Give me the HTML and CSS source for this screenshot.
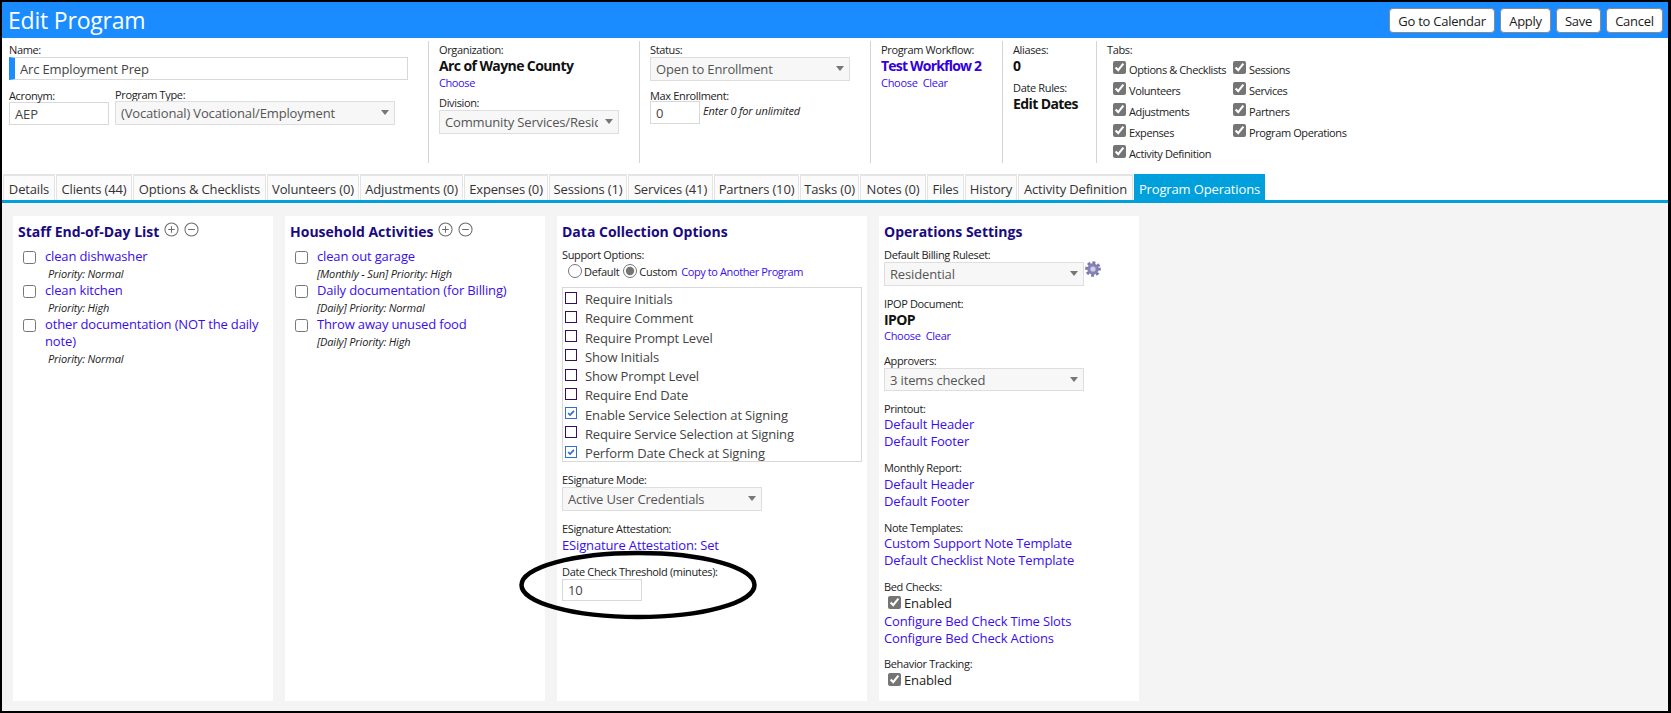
FILE: index.html
```html
<!DOCTYPE html>
<html lang="en">
<head>
<meta charset="utf-8">
<title>Edit Program</title>
<link rel="stylesheet" href="styles.css">
</head>
<body>
<div class="frame">
  <header class="topbar">
    <h1 class="title">Edit Program</h1>
    <div class="actions">
      <button class="btn b-cal">Go to Calendar</button>
      <button class="btn b-apply">Apply</button>
      <button class="btn b-save">Save</button>
      <button class="btn b-cancel">Cancel</button>
    </div>
  </header>

  <section class="form">
    <div class="col col-name">
      <div class="lbl">Name:</div>
      <input class="field field-name" value="Arc Employment Prep">
      <div class="row-2">
        <div>
          <div class="lbl lbl-low">Acronym:</div>
          <input class="field field-acr" value="AEP">
        </div>
        <div>
          <div class="lbl lbl-up">Program Type:</div>
          <div class="dd dd-type"><span class="dd-text">(Vocational) Vocational/Employment</span><i class="caret"></i></div>
        </div>
      </div>
    </div>
    <div class="col col-org">
      <div class="lbl">Organization:</div>
      <div class="strong">Arc of Wayne County</div>
      <a class="link small">Choose</a>
      <div class="lbl gap5">Division:</div>
      <div class="dd dd-div"><span class="dd-text">Community Services/Residential</span><i class="caret"></i></div>
    </div>
    <div class="col col-status">
      <div class="lbl">Status:</div>
      <div class="dd dd-status"><span class="dd-text">Open to Enrollment</span><i class="caret"></i></div>
      <div class="lbl gap6">Max Enrollment:</div>
      <div class="max-row">
        <input class="field field-max" value="0">
        <em class="hint">Enter 0 for unlimited</em>
      </div>
    </div>
    <div class="col col-wf">
      <div class="lbl">Program Workflow:</div>
      <a class="link strong">Test Workflow 2</a>
      <div class="small"><a class="link">Choose</a>&nbsp; <a class="link">Clear</a></div>
    </div>
    <div class="col col-alias">
      <div class="lbl">Aliases:</div>
      <div class="strong">0</div>
      <div class="lbl gap5">Date Rules:</div>
      <div class="strong">Edit Dates</div>
    </div>
    <div class="col col-tabs">
      <div class="lbl">Tabs:</div>
      <div class="tabs-grid">
        <label class="tick"><input type="checkbox" checked>Options &amp; Checklists</label>
        <label class="tick"><input type="checkbox" checked>Sessions</label>
        <label class="tick"><input type="checkbox" checked>Volunteers</label>
        <label class="tick"><input type="checkbox" checked>Services</label>
        <label class="tick"><input type="checkbox" checked>Adjustments</label>
        <label class="tick"><input type="checkbox" checked>Partners</label>
        <label class="tick"><input type="checkbox" checked>Expenses</label>
        <label class="tick"><input type="checkbox" checked>Program Operations</label>
        <label class="tick"><input type="checkbox" checked>Activity Definition</label>
      </div>
    </div>
  </section>

  <nav class="tabs">
    <a class="tab t1">Details</a>
    <a class="tab t2">Clients (44)</a>
    <a class="tab t3">Options &amp; Checklists</a>
    <a class="tab t4">Volunteers (0)</a>
    <a class="tab t5">Adjustments (0)</a>
    <a class="tab t6">Expenses (0)</a>
    <a class="tab t7">Sessions (1)</a>
    <a class="tab t8">Services (41)</a>
    <a class="tab t9">Partners (10)</a>
    <a class="tab t10">Tasks (0)</a>
    <a class="tab t11">Notes (0)</a>
    <a class="tab t12">Files</a>
    <a class="tab t13">History</a>
    <a class="tab t14">Activity Definition</a>
    <a class="tab t15 active">Program Operations</a>
  </nav>

  <main class="content">
    <section class="panel p-list">
      <h2 class="ptitle">Staff End-of-Day List
        <svg class="pm" viewBox="0 0 16 16"><circle cx="8" cy="8" r="7"/><path d="M8 4.5v7M4.5 8h7"/></svg>
        <svg class="pm" viewBox="0 0 16 16"><circle cx="8" cy="8" r="7"/><path d="M4.5 8h7"/></svg>
      </h2>
      <div class="item"><input type="checkbox"><div class="item-body"><a class="link">clean dishwasher</a><em class="sub sub-in">Priority: Normal</em></div></div>
      <div class="item"><input type="checkbox"><div class="item-body"><a class="link">clean kitchen</a><em class="sub sub-in">Priority: High</em></div></div>
      <div class="item"><input type="checkbox"><div class="item-body"><a class="link">other documentation (NOT the daily note)</a><em class="sub sub-in">Priority: Normal</em></div></div>
    </section>

    <section class="panel p-list">
      <h2 class="ptitle">Household Activities
        <svg class="pm" viewBox="0 0 16 16"><circle cx="8" cy="8" r="7"/><path d="M8 4.5v7M4.5 8h7"/></svg>
        <svg class="pm" viewBox="0 0 16 16"><circle cx="8" cy="8" r="7"/><path d="M4.5 8h7"/></svg>
      </h2>
      <div class="item"><input type="checkbox"><div class="item-body"><a class="link">clean out garage</a><em class="sub">[Monthly - Sun] Priority: High</em></div></div>
      <div class="item"><input type="checkbox"><div class="item-body"><a class="link">Daily documentation (for Billing)</a><em class="sub">[Daily] Priority: Normal</em></div></div>
      <div class="item"><input type="checkbox"><div class="item-body"><a class="link">Throw away unused food</a><em class="sub">[Daily] Priority: High</em></div></div>
    </section>

    <section class="panel p-data">
      <h2 class="ptitle">Data Collection Options</h2>
      <div class="lbl gap4">Support Options:</div>
      <div class="radios">
        <label class="radio"><input type="radio" name="support">Default</label>
        <label class="radio"><input type="radio" name="support" checked>Custom</label>
        <a class="link small">Copy to Another Program</a>
      </div>
      <div class="optbox">
        <div class="opt"><span class="sq"></span>Require Initials</div>
        <div class="opt"><span class="sq"></span>Require Comment</div>
        <div class="opt"><span class="sq"></span>Require Prompt Level</div>
        <div class="opt"><span class="sq"></span>Show Initials</div>
        <div class="opt"><span class="sq"></span>Show Prompt Level</div>
        <div class="opt"><span class="sq"></span>Require End Date</div>
        <div class="opt"><span class="sq on"><svg viewBox="0 0 12 12"><path d="M2.5 6l2.4 2.4 4.6-5"/></svg></span>Enable Service Selection at Signing</div>
        <div class="opt"><span class="sq"></span>Require Service Selection at Signing</div>
        <div class="opt"><span class="sq on"><svg viewBox="0 0 12 12"><path d="M2.5 6l2.4 2.4 4.6-5"/></svg></span>Perform Date Check at Signing</div>
      </div>
      <div class="lbl gap10">ESignature Mode:</div>
      <div class="dd dd-200"><span class="dd-text">Active User Credentials</span><i class="caret"></i></div>
      <div class="lbl gap10">ESignature Attestation:</div>
      <a class="link block">ESignature Attestation: Set</a>
      <div class="lbl gap10">Date Check Threshold (minutes):</div>
      <input class="field field-thresh" value="10">
    </section>

    <section class="panel p-ops">
      <h2 class="ptitle">Operations Settings</h2>
      <div class="lbl gap4">Default Billing Ruleset:</div>
      <div class="ruleset">
        <div class="dd dd-200"><span class="dd-text">Residential</span><i class="caret"></i></div>
        <svg class="gear" viewBox="0 0 16 16"><circle class="gear-teeth" cx="8" cy="8" r="6.5" transform="rotate(-11 8 8)"/><circle class="gear-body" cx="8" cy="8" r="5.4"/><circle class="gear-hole" cx="8" cy="8" r="2.6"/></svg>
      </div>
      <div class="lbl gap10">IPOP Document:</div>
      <div class="strong s17">IPOP</div>
      <div class="small"><a class="link">Choose</a>&nbsp; <a class="link">Clear</a></div>
      <div class="lbl gap10">Approvers:</div>
      <div class="dd dd-200 h23"><span class="dd-text">3 items checked</span><i class="caret"></i></div>
      <div class="lbl gap10">Printout:</div>
      <a class="link block">Default Header</a>
      <a class="link block">Default Footer</a>
      <div class="lbl gap10">Monthly Report:</div>
      <a class="link block">Default Header</a>
      <a class="link block">Default Footer</a>
      <div class="lbl gap10">Note Templates:</div>
      <a class="link block">Custom Support Note Template</a>
      <a class="link block">Default Checklist Note Template</a>
      <div class="lbl gap10">Bed Checks:</div>
      <label class="enabled"><input type="checkbox" checked>Enabled</label>
      <a class="link block gap2">Configure Bed Check Time Slots</a>
      <a class="link block">Configure Bed Check Actions</a>
      <div class="lbl gap9">Behavior Tracking:</div>
      <label class="enabled"><input type="checkbox" checked>Enabled</label>
    </section>

    <svg class="scribble" viewBox="0 0 245 76"><ellipse cx="122" cy="38" rx="116.5" ry="32"/></svg>
  </main>
</div>
</body>
</html>
```
FILE: styles.css
```css
* { box-sizing: border-box; }
html, body { margin: 0; height: 100%; overflow: hidden; }
body { font-family: "Open Sans", "Noto Sans", sans-serif; font-size: 13px; color: #222; background: #fff; }
.frame { position: relative; width: 1671px; height: 713px; border: solid #000; border-width: 2px 3px 2px 2px; display: flex; flex-direction: column; overflow: hidden; background: #fff; }

.topbar { height: 36px; flex: none; background: #1a8cff; display: flex; align-items: center; justify-content: space-between; padding: 0 5px 0 6px; }
.title { margin: 0; font-size: 23px; font-weight: 400; color: #fff; letter-spacing: -0.2px; }
.actions { display: flex; gap: 5px; margin-top: 1px; }
.btn { height: 25px; padding: 0; background: #fff; border: 1px solid #8a8a8a; border-radius: 4px; font: 13px "Open Sans", sans-serif; color: #1a1a1a; letter-spacing: -0.25px; }
.b-cal { width: 106px; }
.b-apply { width: 51px; }
.b-save { width: 45px; }
.b-cancel { width: 57px; }

.form { height: 136px; flex: none; display: flex; padding: 3px 0 11px; }
.col { padding-left: 10px; border-right: 1px solid #d4d4d4; }
.col-name { width: 427px; padding-left: 7px; }
.col-org { width: 211px; }
.col-status { width: 231px; }
.col-wf { width: 132px; }
.col-alias { width: 94px; }
.col-tabs { border-right: 0; flex: 1; }
.lbl { font-size: 11px; line-height: 15px; margin-top: 1px; color: #222; letter-spacing: -0.35px; white-space: nowrap; }
.field { display: block; height: 23px; border: 1px solid #d8d8d8; padding: 0 5px; font: 13px "Open Sans", sans-serif; color: #444; background: #fff; outline: 0; letter-spacing: -0.15px; }
.field-name { width: 399px; border-width: 1px 1px 1px 6px; border-color: #d8d8d8 #d8d8d8 #d8d8d8 #1a8cff; padding-left: 5px; }
.field-acr { width: 100px; }
.field-max { width: 50px; height: 23px; }
.field-thresh { width: 80px; height: 22px; }
.row-2 { display: flex; gap: 6px; margin-top: 6px; }
.lbl-low { margin-top: 2px; margin-bottom: -1px; }
.lbl-up { margin-bottom: -1px; }
.dd { position: relative; height: 24px; border: 1px solid #dedede; background: #f7f7f7; padding: 0 20px 0 5px; font-size: 13px; line-height: 22px; color: #555; overflow: hidden; letter-spacing: -0.15px; }
.dd-text { display: block; white-space: nowrap; overflow: hidden; }
.caret { position: absolute; right: 5px; top: 8px; border: 4px solid transparent; border-top: 5px solid #777; border-bottom: 0; }
.dd-type { width: 280px; }
.dd-div { width: 180px; }
.dd-status { width: 200px; }
.dd-200 { width: 200px; }
.h23 { height: 23px; }
.strong { display: block; font-size: 14px; line-height: 18px; font-weight: 700; color: #111; letter-spacing: -0.6px; white-space: nowrap; }
.s17 { line-height: 17px; }
a.strong { color: #3300dd; letter-spacing: -0.8px; }
.link { color: #3a0df0; letter-spacing: -0.15px; }
.small { font-size: 11px; line-height: 15px; letter-spacing: -0.3px; }
.small .link { letter-spacing: -0.3px; }
a.small { display: block; letter-spacing: -0.4px; }
.block { display: block; font-size: 13px; line-height: 17px; white-space: nowrap; }
.lbl + .block { margin-top: 0.5px; }
.gap2 { margin-top: 2px; }
.gap4 { margin-top: 4.5px; }
.gap5 { margin-top: 5px; }
.gap6 { margin-top: 6.5px; }
.gap9 { margin-top: 9px; }
.gap10 { margin-top: 10px; }
.max-row { display: flex; margin-top: -1.5px; gap: 3px; }
.hint { font-size: 11px; line-height: 14px; margin-top: 3px; color: #222; letter-spacing: -0.15px; }
.tabs-grid { display: grid; grid-template-columns: 120px 120px; grid-auto-rows: 21px; margin: 1px 0 0 6px; }
.tick { display: flex; align-items: center; padding-top: 1px; font-size: 11px; letter-spacing: -0.4px; white-space: nowrap; color: #222; }
input[type=checkbox], input[type=radio] { accent-color: #757575; margin: 0; flex: none; }
.tick input { margin-right: 3px; margin-top: -3px; width: 13px; height: 13px; }

.tabs { height: 26px; flex: none; display: flex; gap: 1px; padding-left: 1px; }
.tab { display: flex; align-items: center; justify-content: center; flex: none; padding-top: 1px; border: solid #e4e4e4; border-width: 2px 1px 0; background: #fbfbfb; color: #333; font-size: 13px; letter-spacing: -0.15px; white-space: nowrap; }
.t1 { width: 52px; } .t2 { width: 76px; } .t3 { width: 133px; } .t4 { width: 92px; } .t5 { width: 103px; } .t6 { width: 84px; } .t7 { width: 78px; } .t8 { width: 85px; } .t9 { width: 85px; } .t10 { width: 59px; } .t11 { width: 66px; } .t12 { width: 37px; } .t13 { width: 52px; } .t14 { width: 115px; } .t15 { width: 131px; }
.tab.active { background: #00a0dc; border-color: #00a0dc; color: #fff; }

.content { position: relative; flex: 1; min-height: 0; background: #f4f4f4; border-top: 3px solid #00a0dc; padding: 13px 10px 10px 11px; display: flex; gap: 12px; }
.panel { background: #fff; padding: 6px 5px 0; }
.p-list { width: 260px; }
.p-data { width: 310px; }
.p-ops { width: 260px; }
.ptitle { display: flex; align-items: center; gap: 5px; margin: 0; height: 20px; line-height: 20px; font-size: 14px; font-weight: 700; color: #1a0a80; letter-spacing: 0; white-space: nowrap; }
.pm { width: 15px; height: 15px; margin-top: -5px; fill: none; stroke: #6c6c6c; stroke-width: 1.1; }
.item { display: flex; gap: 9px; margin: 6px 0 -5px 5px; min-height: 33px; }
.item input { width: 13px; height: 13px; margin-top: 3px; }
.item-body { display: flex; flex-direction: column; font-size: 13px; line-height: 17px; }
.sub { font-size: 11px; line-height: 15px; margin-top: 1px; color: #222; letter-spacing: -0.15px; }
.sub-in { padding-left: 3px; }
.radios { display: flex; align-items: center; height: 16px; margin-top: 1.5px; padding-left: 6px; gap: 4px; }
.radio { display: flex; align-items: center; gap: 2px; font-size: 11px; letter-spacing: -0.3px; }
.radio input { width: 14px; height: 14px; }
.optbox { height: 175px; margin-top: 8px; border: 1px solid #d8d8d8; padding-top: 1.5px; }
.opt { display: flex; align-items: center; height: 19.25px; font-size: 13px; color: #444; letter-spacing: -0.15px; white-space: nowrap; padding-left: 2px; }
.sq { width: 12px; height: 12px; margin: -3px 8px 0 0; border: 1px solid #3a0f5a; background: #fff; flex: none; }
.sq.on { border-color: #2f6fd0; }
.sq svg { display: block; width: 10px; height: 10px; fill: none; stroke: #2f6fd0; stroke-width: 2; }
.ruleset { display: flex; align-items: flex-start; }
.gear { width: 16px; height: 16px; margin-top: -1px; margin-left: 1px; }
.gear-teeth { fill: none; stroke: #7a78ac; stroke-width: 2.6; stroke-dasharray: 2.84 2.26; }
.gear-body { fill: #8583b8; stroke: #6e6c9e; stroke-width: 0.6; }
.gear-hole { fill: #cfcee6; }
.enabled { display: flex; align-items: center; height: 17px; gap: 3px; padding-left: 4px; font-size: 13px; letter-spacing: -0.15px; color: #222; }
.enabled input { width: 13px; height: 13px; }
.scribble { position: absolute; left: 514px; top: 344px; width: 245px; height: 76px; fill: none; stroke: #000; stroke-width: 4.5px; }
```
